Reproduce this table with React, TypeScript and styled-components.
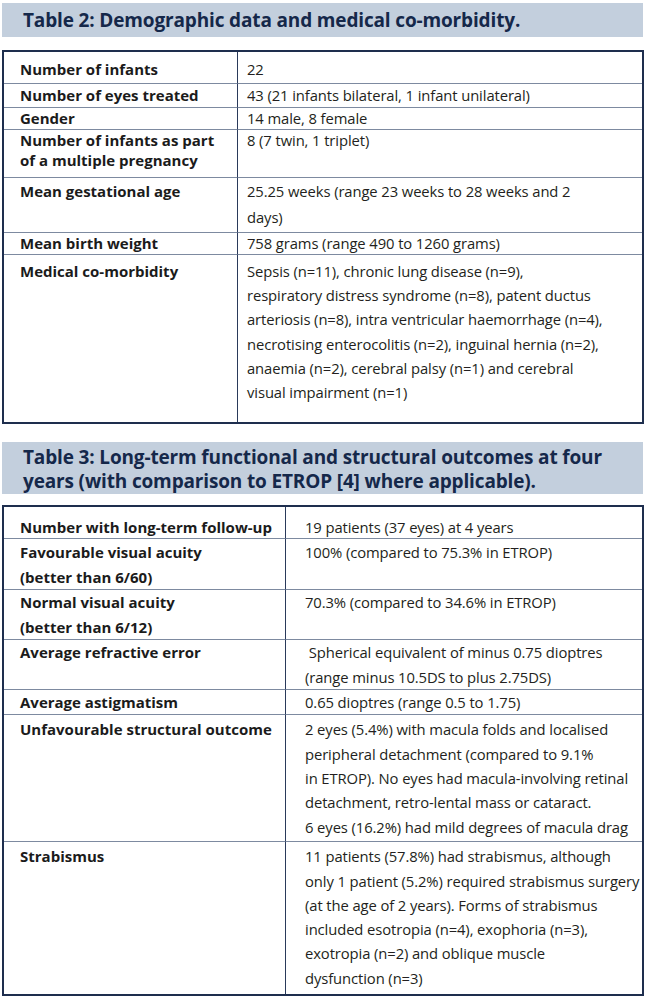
import React from "react";
import styled, { createGlobalStyle } from "styled-components";

const Global = createGlobalStyle`
  html, body { margin: 0; padding: 0; background: #ffffff; }
  body { font-family: "Open Sans", Lato, "Liberation Sans", sans-serif; }
`;

const Page = styled.div`
  width: 649px;
  display: flex;
  flex-direction: column;
  padding: 3px 5px 0 2px;
  box-sizing: border-box;
`;

const Section = styled.section<{ $gap: number; $after?: number }>`
  display: flex;
  flex-direction: column;
  gap: ${(p) => p.$gap}px;
  margin-bottom: ${(p) => p.$after ?? 0}px;
`;

const Caption = styled.h2<{ $pt: number; $pb: number; $lh: number }>`
  margin: 0;
  background: #c3cfdd;
  color: #15284a;
  font-family: "Open Sans", Lato, sans-serif;
  font-weight: 700;
  font-size: 19px;
  letter-spacing: -0.15px;
  line-height: ${(p) => p.$lh}px;
  padding: ${(p) => p.$pt}px 10px ${(p) => p.$pb}px 21px;
  width: 641px;
  box-sizing: border-box;
`;

const Table = styled.div<{ $col: number }>`
  display: grid;
  grid-template-columns: ${(p) => p.$col}px minmax(0, 1fr);
  width: 642px;
  box-sizing: border-box;
  border: 2px solid #1e2e4e;
`;

const Row = styled.div<{ $pt: number; $pb: number; $last?: boolean }>`
  display: contents;
  & > div {
    padding-top: ${(p) => p.$pt}px;
    padding-bottom: ${(p) => p.$pb}px;
    border-bottom: ${(p) => (p.$last ? "none" : "1px solid #7d8aa0")};
  }
`;

const Label = styled.div<{ $lh: number; $pl: number }>`
  font-weight: 700;
  font-size: 15px;
  line-height: ${(p) => p.$lh}px;
  color: #1b1b1b;
  padding-left: ${(p) => p.$pl}px;
  padding-right: 2px;
  border-right: 1.5px solid #2a3a5a;
  white-space: pre;
`;

const Value = styled.div<{ $lh: number; $pl: number }>`
  font-size: 14.8px;
  letter-spacing: -0.1px;
  line-height: ${(p) => p.$lh}px;
  color: #231f20;
  padding-left: ${(p) => p.$pl}px;
  padding-right: 0;
  white-space: pre;
  overflow: visible;
`;

type R = { label: string[]; value: string[]; pt: number; pb: number; llh: number; vlh: number };

const table2: R[] = [
  { label: ["Number of infants"], value: ["22"], pt: 5, pb: 2, llh: 24, vlh: 24 },
  { label: ["Number of eyes treated"], value: ["43 (21 infants bilateral, 1 infant unilateral)"], pt: 0, pb: 0, llh: 23, vlh: 23 },
  { label: ["Gender"], value: ["14 male, 8 female"], pt: 0, pb: 0, llh: 21, vlh: 21 },
  { label: ["Number of infants as part", "of a multiple pregnancy"], value: ["8 (7 twin, 1 triplet)"], pt: 0, pb: 7, llh: 20, vlh: 20 },
  { label: ["Mean gestational age"], value: ["25.25 weeks (range 23 weeks to 28 weeks and 2", "days)"], pt: 0, pb: 2, llh: 26, vlh: 26 },
  { label: ["Mean birth weight"], value: ["758 grams (range 490 to 1260 grams)"], pt: 0, pb: 0, llh: 21, vlh: 21 },
  {
    label: ["Medical co-morbidity"],
    value: [
      "Sepsis (n=11), chronic lung disease (n=9),",
      "respiratory distress syndrome (n=8), patent ductus",
      "arteriosis (n=8), intra ventricular haemorrhage (n=4),",
      "necrotising enterocolitis (n=2), inguinal hernia (n=2),",
      "anaemia (n=2), cerebral palsy (n=1) and cerebral",
      "visual impairment (n=1)",
    ],
    pt: 4,
    pb: 18,
    llh: 24.2,
    vlh: 24.2,
  },
];

const table3: R[] = [
  { label: ["Number with long-term follow-up"], value: ["19 patients (37 eyes) at 4 years"], pt: 9, pb: 0, llh: 22, vlh: 22 },
  { label: ["Favourable visual acuity", "(better than 6/60)"], value: ["100% (compared to 75.3% in ETROP)"], pt: 1, pb: 0, llh: 24.5, vlh: 24.5 },
  { label: ["Normal visual acuity", "(better than 6/12)"], value: ["70.3% (compared to 34.6% in ETROP)"], pt: 0, pb: 0, llh: 24.5, vlh: 24.5 },
  { label: ["Average refractive error"], value: [" Spherical equivalent of minus 0.75 dioptres", "(range minus 10.5DS to plus 2.75DS)"], pt: 0, pb: 0, llh: 24.5, vlh: 24.5 },
  { label: ["Average astigmatism"], value: ["0.65 dioptres (range 0.5 to 1.75)"], pt: 1, pb: 0, llh: 23, vlh: 23 },
  {
    label: ["Unfavourable structural outcome"],
    value: [
      "2 eyes (5.4%) with macula folds and localised",
      "peripheral detachment (compared to 9.1%",
      "in ETROP). No eyes had macula-involving retinal",
      "detachment, retro-lental mass or cataract.",
      "6 eyes (16.2%) had mild degrees of macula drag",
    ],
    pt: 2,
    pb: 2,
    llh: 24.4,
    vlh: 24.4,
  },
  {
    label: ["Strabismus"],
    value: [
      "11 patients (57.8%) had strabismus, although",
      "only 1 patient (5.2%) required strabismus surgery",
      "(at the age of 2 years). Forms of strabismus",
      "included esotropia (n=4), exophoria (n=3),",
      "exotropia (n=2) and oblique muscle",
      "dysfunction (n=3)",
    ],
    pt: 2,
    pb: 4,
    llh: 24.3,
    vlh: 24.3,
  },
];

function Lines({ lines }: { lines: string[] }) {
  return (
    <>
      {lines.map((l, i) => (
        <React.Fragment key={i}>
          {l}
          {i < lines.length - 1 && <br />}
        </React.Fragment>
      ))}
    </>
  );
}

function DataTable({ rows, col, lpl, vpl }: { rows: R[]; col: number; lpl: number; vpl: number }) {
  return (
    <Table $col={col}>
      {rows.map((r, i) => (
        <Row key={i} $pt={r.pt} $pb={r.pb} $last={i === rows.length - 1}>
          <Label $lh={r.llh} $pl={lpl}>
            <Lines lines={r.label} />
          </Label>
          <Value $lh={r.vlh} $pl={vpl}>
            <Lines lines={r.value} />
          </Value>
        </Row>
      ))}
    </Table>
  );
}

export default function App() {
  return (
    <>
      <Global />
      <Page>
        <Section $gap={13} $after={18}>
          <Caption $pt={5} $pb={5} $lh={24}>
            Table 2: Demographic data and medical co-morbidity.
          </Caption>
          <DataTable rows={table2} col={234} lpl={16} vpl={9} />
        </Section>
        <Section $gap={11}>
          <Caption $pt={3} $pb={1} $lh={24}>
            Table 3: Long-term functional and structural outcomes at four
            <br />
            years (with comparison to ETROP [4] where applicable).
          </Caption>
          <DataTable rows={table3} col={282} lpl={16} vpl={19} />
        </Section>
      </Page>
    </>
  );
}
